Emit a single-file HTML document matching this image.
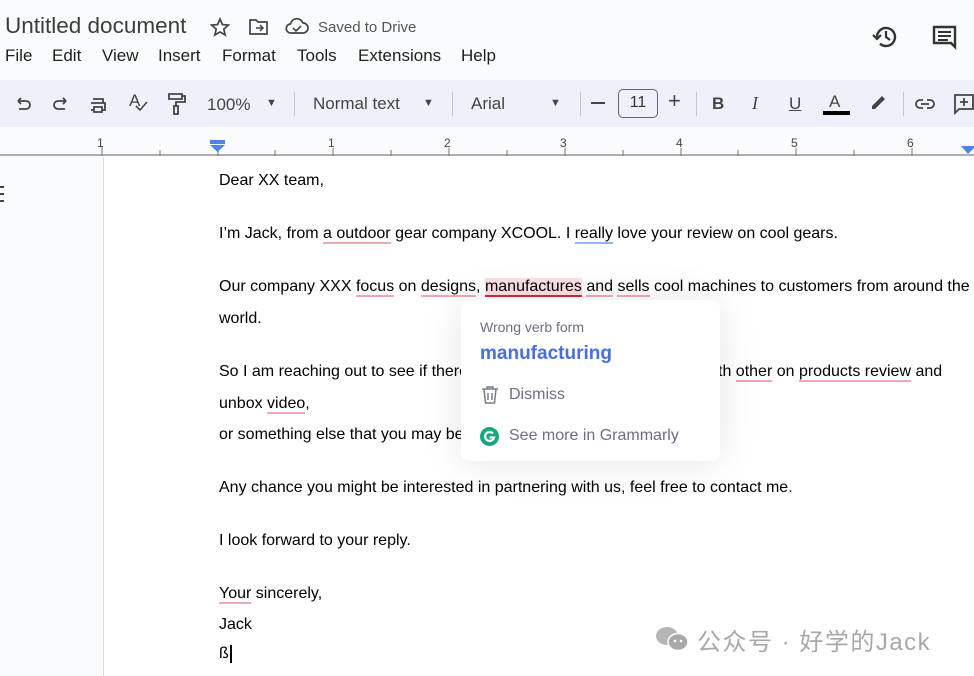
<!DOCTYPE html>
<html><head><meta charset="utf-8"><style>
*{margin:0;padding:0;box-sizing:border-box}
body{width:974px;height:676px;overflow:hidden;background:#f9fbfd;font-family:"Liberation Sans",Arial,sans-serif;position:relative;color:#1f1f1f}
.a{position:absolute;white-space:nowrap}
.tb{position:absolute;left:0;top:80px;width:974px;height:47px;background:#edf2fa}
.sep{position:absolute;top:92px;width:1px;height:24px;background:#c7c7c7}
.page{position:absolute;left:103px;top:157px;width:871px;height:519px;background:#fff;border-left:1px solid #dadce0}
.t{position:absolute;left:219px;font-size:16px;color:#000;white-space:nowrap}
.r{border-bottom:2px solid #f2a5b3}
.b{border-bottom:2px solid #8fb5f0}
.pop{position:absolute;left:461px;top:300px;width:259px;height:161px;background:#fff;border-radius:9px;box-shadow:0 2px 40px rgba(0,0,0,.10)}
</style></head><body>
<div class="a" style="left:5px;top:13px;font-size:22.5px;color:#3c3c3c">Untitled document</div>
<svg class="a" style="left:209px;top:17px" width="22" height="20" viewBox="0 0 22 20"><path d="M11 2l2.4 5.6 6 .5-4.6 4 1.4 5.9L11 15l-5.2 3 1.4-5.9-4.6-4 6-.5z" fill="none" stroke="#444" stroke-width="1.7"/></svg>
<svg class="a" style="left:248px;top:18px" width="22" height="18" viewBox="0 0 22 18"><path d="M2 2h6l2 2h9v12H2z" fill="none" stroke="#444" stroke-width="1.7"/><path d="M8 10h7M12 7l3 3-3 3" fill="none" stroke="#444" stroke-width="1.5"/></svg>
<svg class="a" style="left:285px;top:17px" width="24" height="18" viewBox="0 0 24 18"><path d="M6 16a4.5 4.5 0 0 1-.5-9A6.5 6.5 0 0 1 18 6a4.8 4.8 0 0 1 0 10z" fill="none" stroke="#444" stroke-width="1.7"/><path d="M8 11l3 3 5-5" fill="none" stroke="#444" stroke-width="1.6"/></svg>
<div class="a" style="left:318px;top:19px;font-size:15px;color:#555">Saved to Drive</div>
<div class="a" style="top:46px;font-size:17px;left:5px">File</div>
<div class="a" style="top:46px;font-size:17px;left:52px">Edit</div>
<div class="a" style="top:46px;font-size:17px;left:102px">View</div>
<div class="a" style="top:46px;font-size:17px;left:158px">Insert</div>
<div class="a" style="top:46px;font-size:17px;left:222px">Format</div>
<div class="a" style="top:46px;font-size:17px;left:297px">Tools</div>
<div class="a" style="top:46px;font-size:17px;left:358px">Extensions</div>
<div class="a" style="top:46px;font-size:17px;left:461px">Help</div>
<svg class="a" style="left:872px;top:24px" width="28" height="26" viewBox="0 0 28 26"><path d="M5 13a9 9 0 1 1 3 6.7" fill="none" stroke="#333" stroke-width="2.4"/><path d="M1 11l4 4 4-4" fill="none" stroke="#333" stroke-width="2.2"/><path d="M14 7v6l4 3" fill="none" stroke="#333" stroke-width="2.2"/></svg>
<svg class="a" style="left:932px;top:25px" width="26" height="26" viewBox="0 0 26 26"><path d="M2 2h21v20l-4-4H2z" fill="none" stroke="#333" stroke-width="2.4"/><path d="M6 7h13M6 11h13M6 15h10" stroke="#333" stroke-width="2"/></svg>
<div class="tb"></div>
<svg class="a" style="left:14px;top:94px" width="100" height="20" viewBox="0 0 100 20" fill="none" stroke="#444" stroke-width="1.8"><path d="M4 7h8a4 4 0 0 1 0 8H5M4 7l3-3M4 7l3 3"/><path d="M56 7h-8a4 4 0 0 0 0 8h7M56 7l-3-3M56 7l-3 3" transform="translate(-4 0)"/><path d="M79 5h10v4M77 9h14v7h-3M80 13h8v5h-8zM79 16h-2"/></svg>
<div class="a" style="left:129px;top:91px;font-size:17px;color:#444">A</div>
<svg class="a" style="left:134px;top:100px" width="14" height="12"><path d="M2 6l4 4 7-8" fill="none" stroke="#444" stroke-width="1.6"/></svg>
<svg class="a" style="left:167px;top:92px" width="20" height="24" viewBox="0 0 20 24" fill="none" stroke="#444" stroke-width="1.8"><path d="M2 2h13v5H2zM15 4h3v6H9v4M7 14h4v8H7z"/></svg>
<div class="a" style="left:207px;top:95px;font-size:17px;color:#444">100%</div>
<div class="a" style="left:266px;top:97px;font-size:11px;color:#444">▼</div>
<div class="sep" style="left:294px"></div>
<div class="a" style="left:313px;top:94px;font-size:17px;color:#444">Normal text</div>
<div class="a" style="left:423px;top:97px;font-size:11px;color:#444">▼</div>
<div class="sep" style="left:452px"></div>
<div class="a" style="left:471px;top:94px;font-size:17px;color:#444">Arial</div>
<div class="a" style="left:550px;top:97px;font-size:11px;color:#444">▼</div>
<div class="sep" style="left:580px"></div>
<div class="a" style="left:591px;top:102px;width:14px;height:2px;background:#444"></div>
<div class="a" style="left:618px;top:89px;width:40px;height:29px;border:1.5px solid #666;border-radius:5px;font-size:16px;color:#333;text-align:center;line-height:26px">11</div>
<div class="a" style="left:668px;top:88px;font-size:22px;color:#444">+</div>
<div class="sep" style="left:696px"></div>
<div class="a" style="left:712px;top:94px;font-size:17px;font-weight:bold;color:#444">B</div>
<div class="a" style="left:752px;top:93px;font-size:18px;font-style:italic;font-family:'Liberation Serif',serif;color:#444">I</div>
<div class="a" style="left:789px;top:94px;font-size:17px;color:#444;text-decoration:underline">U</div>
<div class="a" style="left:829px;top:92px;font-size:17px;color:#444">A</div>
<div class="a" style="left:823px;top:111px;width:27px;height:4px;background:#000"></div>
<svg class="a" style="left:868px;top:92px" width="20" height="18"><path d="M4 14l10-10 3 3-10 10H4z" fill="#444"/></svg>
<div class="sep" style="left:903px"></div>
<svg class="a" style="left:914px;top:97px" width="22" height="14" viewBox="0 0 22 14" fill="none" stroke="#444" stroke-width="1.8"><path d="M9 3H6a4 4 0 0 0 0 8h3M13 3h3a4 4 0 0 1 0 8h-3M7 7h8"/></svg>
<svg class="a" style="left:953px;top:93px" width="21" height="22" viewBox="0 0 21 22" fill="none" stroke="#444" stroke-width="1.8"><path d="M2 2h18v14H6l-4 4zM11 5v8M7 9h8"/></svg>
<svg class="a" style="left:0;top:130px" width="974" height="28">
<line x1="0" y1="25" x2="974" y2="25" stroke="#666" stroke-width="1"/>
<g stroke="#777" stroke-width="1">
<path d="M102 16v10M160 20v6M218 20v6M275 20v6M333 18v8M391 20v6M449 18v8M507 20v6M565 18v8M623 20v6M681 18v8M738 20v6M796 18v8M854 20v6M912 18v8"/>
</g>
<g font-size="12" fill="#444" font-family="Liberation Sans">
<text x="97" y="17">1</text><text x="328" y="17">1</text><text x="444" y="17">2</text><text x="560" y="17">3</text><text x="676" y="17">4</text><text x="791" y="17">5</text><text x="907" y="17">6</text></g>
<path d="M210 10h15v4h-15z" fill="#4a86e8"/><path d="M210 15h15l-7.5 7z" fill="#4a86e8"/>
<path d="M961 16h13v2l-6 6z" fill="#4a86e8"/>
</svg>
<div class="page"></div>
<div class="a" style="left:0;top:186px;width:4px;height:2px;background:#444"></div>
<div class="a" style="left:0;top:193px;width:4px;height:2px;background:#444"></div>
<div class="a" style="left:0;top:200px;width:4px;height:2px;background:#444"></div>
<div class="t" style="top:172px">Dear XX team,</div>
<div class="t" style="top:225px">I’m Jack, from <span class="r">a outdoor</span> gear company XCOOL. I <span class="b">really</span> love your review on cool gears.</div>
<div class="t" style="top:278px">Our company XXX <span class="r">focus</span> on <span class="r">designs</span>, <span style="background:#fbe0e3;border-bottom:2px solid #d9253f">manufactures</span> <span class="r">and</span> <span class="r">sells</span> cool machines to customers from around the</div>
<div class="t" style="top:310px">world.</div>
<div class="t" style="top:363px">So I am reaching out to see if there</div>
<div class="t" style="top:363px;left:718px">th <span class="r">other</span> on <span class="r">products review</span> and</div>
<div class="t" style="top:395px">unbox <span class="r">video</span>,</div>
<div class="t" style="top:426px">or something else that you may be</div>
<div class="t" style="top:479px">Any chance you might be interested in partnering with us, feel free to contact me.</div>
<div class="t" style="top:532px">I look forward to your reply.</div>
<div class="t" style="top:585px"><span class="r">Your</span> sincerely,</div>
<div class="t" style="top:616px">Jack</div>
<div class="t" style="top:645px">ß<span style="border-left:2px solid #000;margin-left:1px;height:18px;display:inline-block;vertical-align:middle"></span></div>
<div class="pop">
<div class="a" style="left:19px;top:19px;font-size:14px;color:#6b6f80">Wrong verb form</div>
<div class="a" style="left:19px;top:43px;font-size:19px;font-weight:bold;color:#4a6ee0">manufacturing</div>
<svg class="a" style="left:20px;top:85px" width="18" height="20" viewBox="0 0 18 20" fill="none" stroke="#7a7e8c" stroke-width="1.5"><path d="M1 4h16M6 4V2h6v2M3 4l1.5 14h9L15 4M7 8v7M11 8v7"/></svg>
<div class="a" style="left:48px;top:86px;font-size:16px;color:#6b6f80">Dismiss</div>
<svg class="a" style="left:19px;top:127px" width="19" height="19" viewBox="0 0 19 19"><circle cx="9.5" cy="9.5" r="9.5" fill="#15a87a"/><path d="M13 6.5A4.5 4.5 0 1 0 14 10.5H9.5" fill="none" stroke="#fff" stroke-width="2.2"/></svg>
<div class="a" style="left:48px;top:127px;font-size:16px;color:#6b6f80">See more in Grammarly</div>
</div>
<svg class="a" style="left:655px;top:625px" width="36" height="28" viewBox="0 0 36 28"><ellipse cx="12" cy="11" rx="11" ry="9" fill="#b5b5b5"/><ellipse cx="23" cy="17" rx="10" ry="8.5" fill="#a9a9a9" stroke="#fff" stroke-width="1.5"/><circle cx="20" cy="16" r="1.3" fill="#fff"/><circle cx="26" cy="16" r="1.3" fill="#fff"/></svg>
<div class="a" style="left:697px;top:622px;font-size:24px;color:#a8a8a8;font-family:'Liberation Sans','Noto Sans CJK SC',sans-serif;letter-spacing:1.5px">公众号 · 好学的Jack</div>
</body></html>
